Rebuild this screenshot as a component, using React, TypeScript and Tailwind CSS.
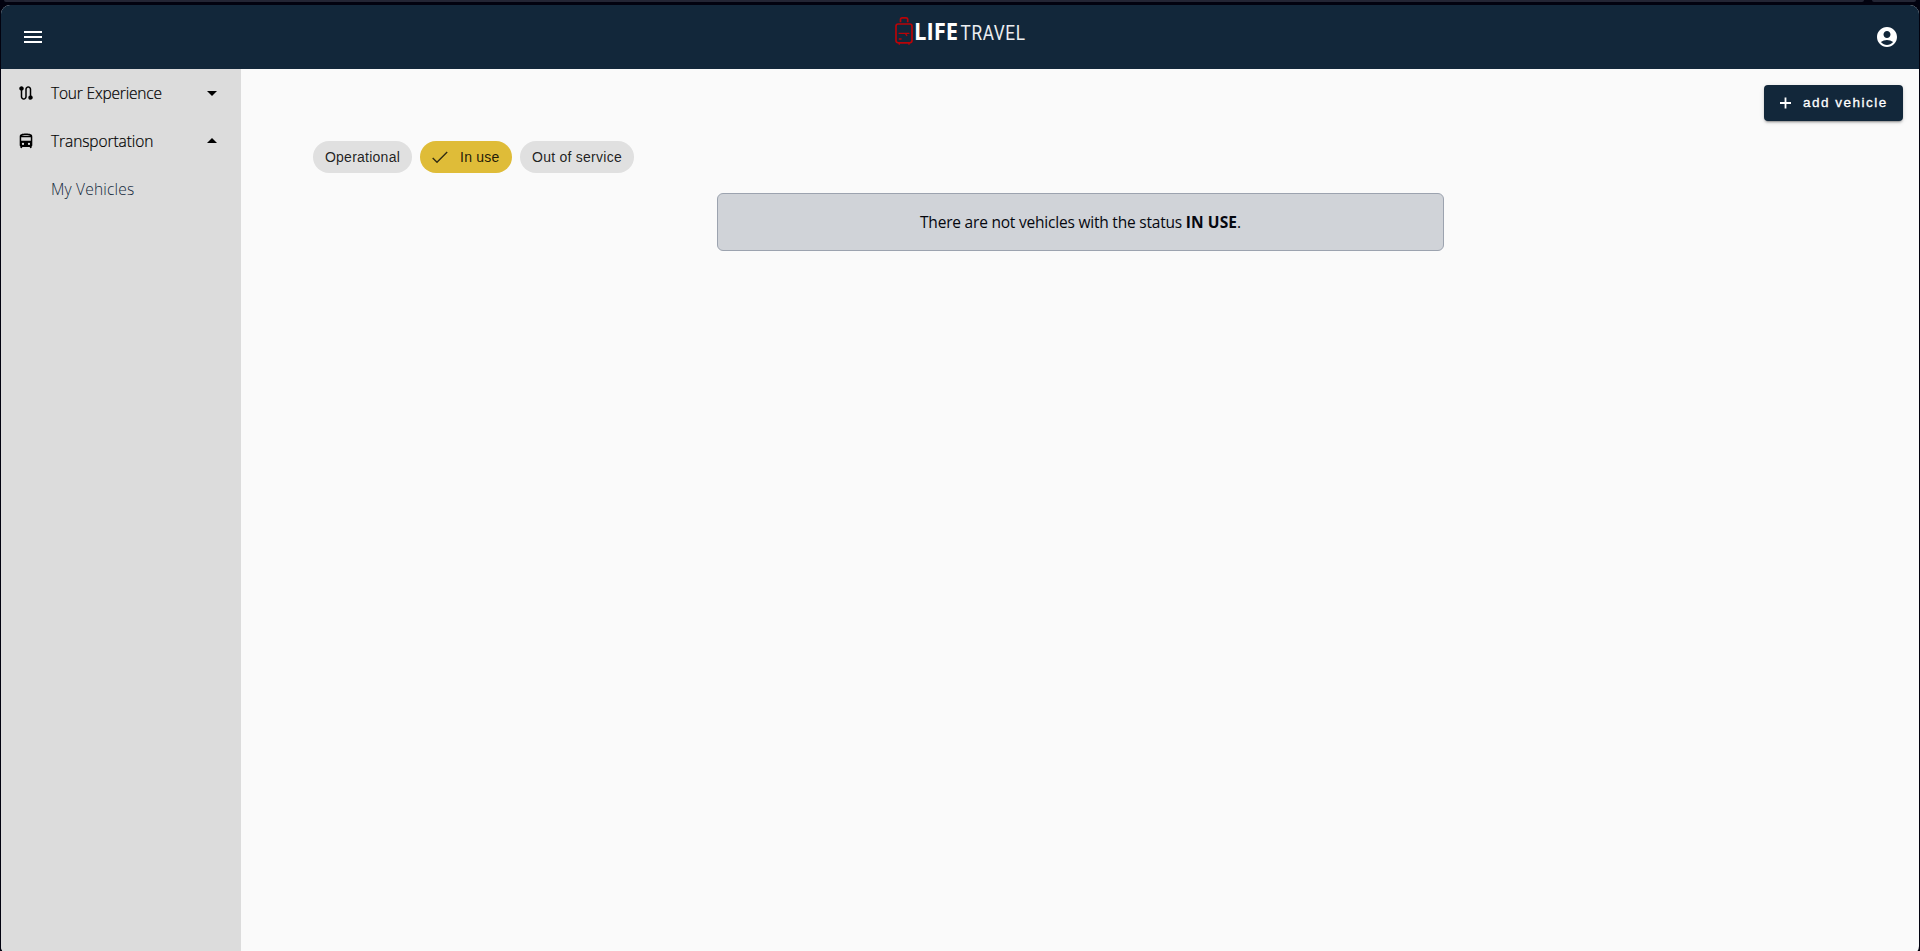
import type { ReactNode } from "react";
import {
  MdAccountCircle,
  MdArrowDropDown,
  MdArrowDropUp,
  MdMenu,
  MdRoute,
} from "react-icons/md";

function Logo() {
  return (
    <svg width="134" height="40" viewBox="0 -4 134 40" className="block overflow-visible">
      <g fill="none" stroke="#b90408" strokeWidth="1.7">
        <rect x="3" y="8" width="16" height="18.8" rx="2.2" />
        <path d="M7.5 6.2V3.6Q7.5 1.9 9.2 1.9H13Q14.7 1.9 14.7 3.6V6.2" />
        <path d="M5.6 17.4H16.4M12.4 17.4L14 20M5.8 23H8.6M6.3 26.8V28.8M16 26.8V28.8" strokeWidth="1.4" />
      </g>
      <text x="21" y="24" fontSize="23.5" fontWeight="700" fill="#ffffff" textLength="44" lengthAdjust="spacingAndGlyphs" fontFamily="'Open Sans', sans-serif">LIFE</text>
      <g transform="translate(67.6 24) scale(0.82 1)">
        <text fontSize="21" fontWeight="400" fill="#eceef0" textLength="78.5" lengthAdjust="spacing" fontFamily="Roboto, sans-serif">TRAVEL</text>
      </g>
    </svg>
  );
}

function BusIcon() {
  return (
    <svg width="18" height="18" viewBox="0 0 18 18" className="block">
      <path
        fillRule="evenodd"
        fill="#000"
        d="M9 1.6C5 1.6 2.7 2.2 2.7 4.8V13.2C2.7 13.8 3 14.3 3.4 14.6V15.6C3.4 16.6 5.2 16.6 5.2 15.6V15H12.8V15.6C12.8 16.6 14.6 16.6 14.6 15.6V14.6C15 14.3 15.3 13.8 15.3 13.2V4.8C15.3 2.2 13 1.6 9 1.6ZM4.6 3.9C5.5 3 12.5 3 13.4 3.9ZM4.2 5.2H13.8V8.8H4.2ZM6 10.8A1.15 1.15 0 1 1 6 13.1A1.15 1.15 0 1 1 6 10.8ZM12 10.8A1.15 1.15 0 1 1 12 13.1A1.15 1.15 0 1 1 12 10.8Z"
      />
    </svg>
  );
}

function NavItem({ icon, children, open }: { icon: ReactNode; children: ReactNode; open: boolean }) {
  return (
    <button className="flex h-12 w-full items-center pr-[17px] pl-4 text-left text-black">
      <span className="w-[34px] text-lg">{icon}</span>
      <span className="flex-1 pt-0.5 [-webkit-text-stroke:0.2px_black]">{children}</span>
      <span className="text-2xl">{open ? <MdArrowDropUp /> : <MdArrowDropDown />}</span>
    </button>
  );
}

export default function App() {
  return (
    <div className="h-[951px] w-[1920px] overflow-hidden bg-[#02020f] font-['Open_Sans','Noto_Sans',sans-serif]">
      <div className="flex h-[5px] gap-2 pr-1 pl-1">
        <div className="h-0.5 flex-1 rounded-b-lg bg-[#232534]" />
        <div className="h-0.5 w-[44px] rounded-b-lg bg-[#232534]" />
      </div>
      <div className="mr-px ml-px flex h-[950px] flex-col overflow-hidden rounded-[9px] bg-[#fafafa]">
        <header className="flex h-16 shrink-0 items-center justify-between bg-[#12273a] pr-5 pl-5 text-white">
          <div className="flex-1 text-2xl"><MdMenu /></div>
          <div className="-mt-2.5"><Logo /></div>
          <div className="flex flex-1 justify-end text-2xl"><MdAccountCircle /></div>
        </header>
        <div className="flex flex-1">
          <aside className="w-60 shrink-0 bg-[#dcdcdc] text-[15.5px] font-light">
            <NavItem icon={<MdRoute />} open={false}>
              <span className="tracking-[-0.18px]">Tour Experience</span>
            </NavItem>
            <NavItem icon={<BusIcon />} open>
              <span className="tracking-[-0.08px]">Transportation</span>
            </NavItem>
            <a className="flex h-12 items-center pt-0.5 pl-[50px] tracking-[0.2px] text-[#12273a]">My Vehicles</a>
          </aside>
          <main className="flex flex-1 flex-col pt-4">
            <button className="mr-4 flex h-9 w-[139px] items-center self-end rounded bg-[#12273a] pl-[15px] font-['Liberation_Sans',sans-serif] text-[13.5px] font-medium tracking-[1.5px] text-white shadow-[0_3px_1px_-2px_rgba(0,0,0,0.2),0_2px_2px_rgba(0,0,0,0.14),0_1px_5px_rgba(0,0,0,0.12)] [-webkit-text-stroke:0.3px_white]">
              <svg width="13" height="12" viewBox="0 0 13 12" className="mr-[11px]">
                <path d="M6.5 0.5V11.5M1 6H12" stroke="#fff" strokeWidth="1.8" />
              </svg>
              add vehicle
            </button>
            <div className="mt-5 ml-[72px] flex h-8 gap-2 font-['Liberation_Sans',sans-serif] text-sm tracking-[0.25px] text-black/87">
              <button className="w-[99px] rounded-full bg-[#e0e0e0]">Operational</button>
              <button className="flex w-[92px] items-center rounded-full bg-[#dfbc38] pl-3">
                <svg width="16" height="13" viewBox="0 0 16 13" className="mr-3">
                  <path d="M0.7 7L5 11.2L15.2 1" fill="none" stroke="#332e14" strokeWidth="1.4" />
                </svg>
                In use
              </button>
              <button className="w-[114px] rounded-full bg-[#e0e0e0]">Out of service</button>
            </div>
            <div className="mt-5 ml-[476px] flex h-[58px] w-[727px] items-center justify-center rounded-md border border-[#9ca3af] bg-[#d0d3d8] pt-0.5 text-[15.5px] tracking-[-0.21px] text-[#05070f]">
              <p>There are not vehicles with the status <b className="tracking-[0.1px]">IN USE</b>.</p>
            </div>
          </main>
        </div>
      </div>
    </div>
  );
}
